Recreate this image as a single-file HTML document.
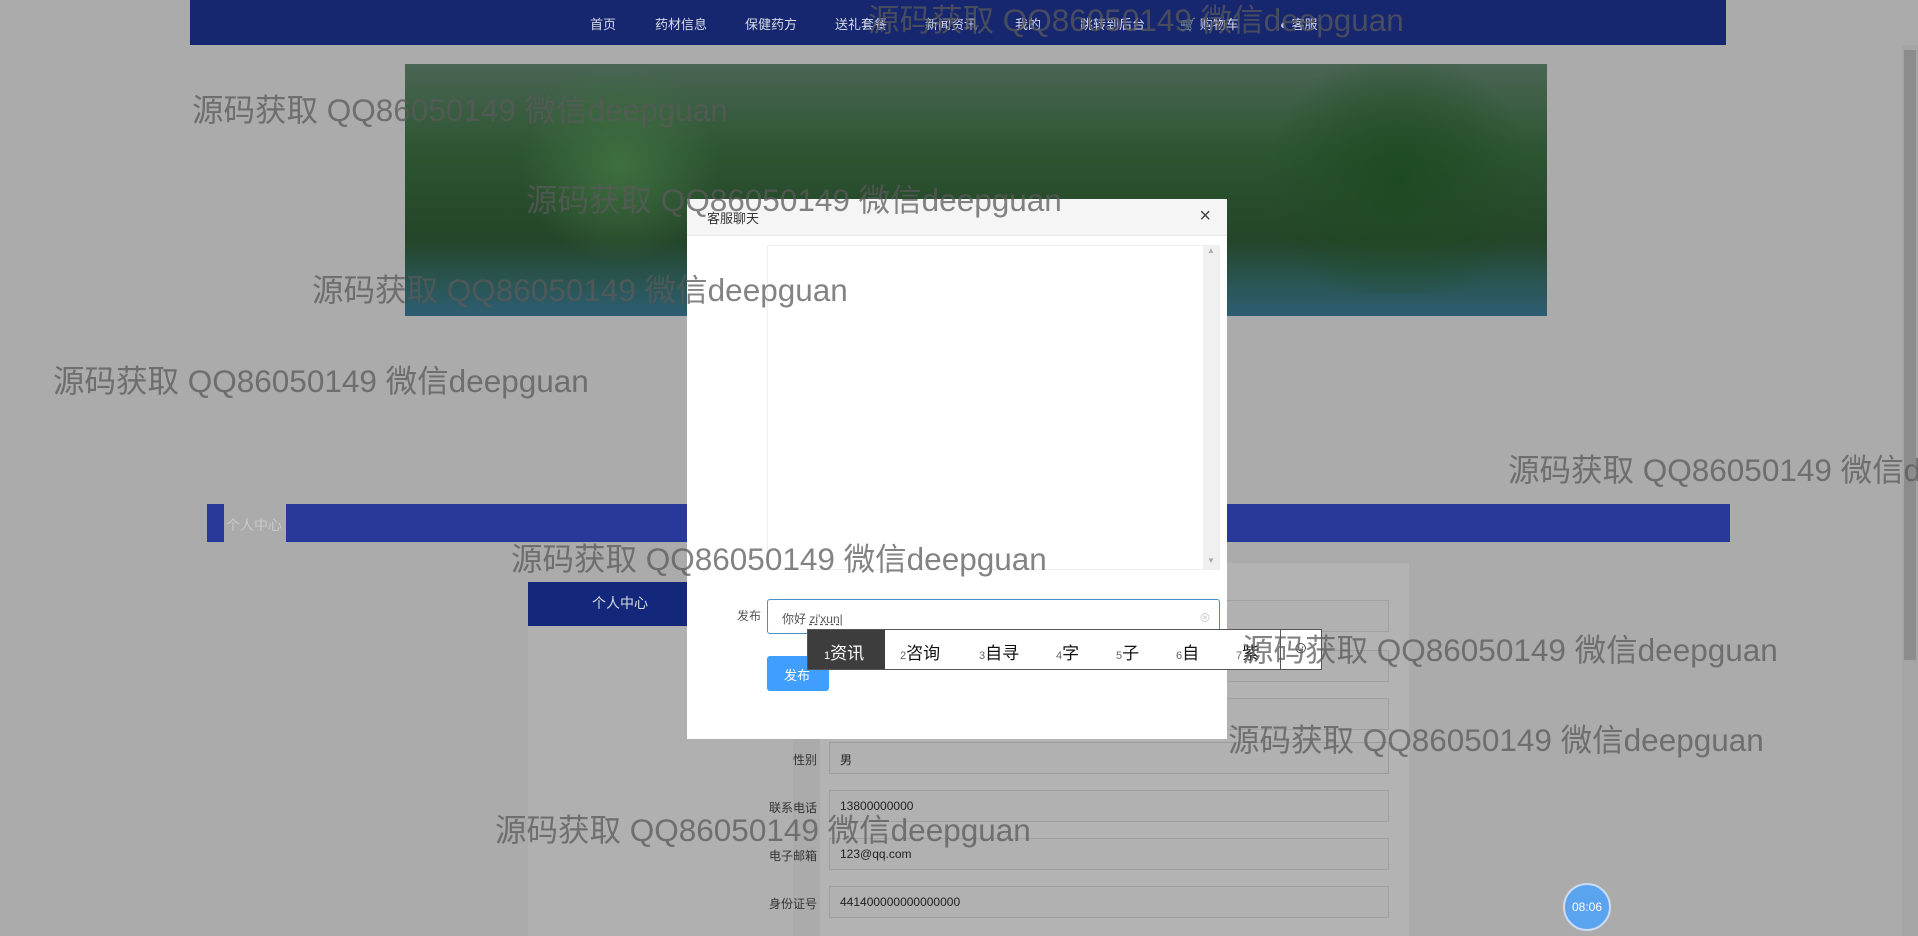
<!DOCTYPE html>
<html><head><meta charset="utf-8"><style>
*{margin:0;padding:0;box-sizing:border-box}
body{width:1918px;height:936px;overflow:hidden;background:#ababab;font-family:"Liberation Sans","Noto Sans CJK SC",sans-serif;position:relative}
.a{position:absolute}
.nav{left:190px;top:0;width:1536px;height:45px;background:#16266f}
.nav span{position:absolute;top:14px;font-size:13px;color:#d8dbe8}
.wm{position:absolute;font-size:31.5px;color:rgba(90,90,90,.75);white-space:nowrap;font-family:"Liberation Sans","Noto Sans CJK SC",sans-serif;z-index:20;line-height:1}
.lbl{position:absolute;font-size:12px;color:#333;text-align:right;width:60px}
.inp{position:absolute;left:829px;width:560px;height:32px;border:1px solid #a0a0a0;background:#b1b1b1;font-size:12px;color:#222;padding:8px 10px}
</style></head><body>
<div class="a nav">
<span style="left:400px">首页</span><span style="left:465px">药材信息</span><span style="left:555px">保健药方</span><span style="left:645px">送礼套餐</span><span style="left:735px">新闻资讯</span><span style="left:825px">我的</span><span style="left:890px">跳转到后台</span><span style="left:990px">🛒 购物车</span><span style="left:1090px">◐ 客服</span>
</div>
<div class="a" style="left:405px;top:64px;width:1142px;height:252px;background:linear-gradient(180deg,#4a6654 0%,#2c5531 35%,#244529 70%,#2a5656 88%,#2d5d72 100%)"></div>
<div class="a" style="left:520px;top:64px;width:200px;height:200px;background:radial-gradient(circle,#3f6f40,transparent 70%)"></div>
<div class="a" style="left:1250px;top:64px;width:297px;height:230px;background:radial-gradient(circle,#1e4a22,transparent 70%)"></div>
<div class="a" style="left:207px;top:504px;width:1523px;height:38px;background:#28399a"></div>
<div class="a" style="left:224px;top:504px;width:62px;height:38px;background:#ababab;font-size:14px;color:#c9c9c9;padding:11px 2px">个人中心</div>
<div class="a" style="left:528px;top:626px;width:265px;height:310px;background:#b0b0b0"></div>
<div class="a" style="left:528px;top:582px;width:265px;height:44px;background:#13287a;color:#d8dbe8;font-size:14px;padding:11px 0 0 64px">个人中心</div>
<div class="a" style="left:820px;top:563px;width:589px;height:373px;background:#b3b3b3"></div>
<div class="inp" style="top:600px"></div><div class="inp" style="top:650px"></div><div class="inp" style="top:698px"></div>
<div class="lbl" style="left:757px;top:751px">性别</div><div class="inp" style="top:742px;border-color:#9c9c9c">男</div>
<div class="lbl" style="left:757px;top:799px">联系电话</div><div class="inp" style="top:790px">13800000000</div>
<div class="lbl" style="left:757px;top:847px">电子邮箱</div><div class="inp" style="top:838px">123@qq.com</div>
<div class="lbl" style="left:757px;top:895px">身份证号</div><div class="inp" style="top:886px">441400000000000000</div>
<div class="a" style="left:1902px;top:45px;width:16px;height:891px;background:#a5a5a5"></div>
<div class="a" style="left:1904px;top:50px;width:12px;height:610px;background:#8c8c8c"></div>
<div class="a" style="left:1563px;top:883px;width:48px;height:48px;border-radius:50%;background:#5aa3ee;border:2px solid #c9dcf3;color:#fff;font-size:12px;text-align:center;line-height:44px">08:06</div>
<div class="a" style="left:687px;top:199px;width:540px;height:540px;background:#fff;z-index:5">
<div style="height:37px;background:#f5f5f5;border-bottom:1px solid #e8e8e8;position:relative"><span style="position:absolute;left:20px;top:9px;font-size:13px;color:#333">客服聊天</span><span style="position:absolute;right:16px;top:6px;font-size:20px;color:#444">×</span></div>
<div style="position:absolute;left:80px;top:46px;width:453px;height:325px;border:1px solid #eee"></div>
<div style="position:absolute;left:516px;top:47px;width:16px;height:323px;background:#f0f0f0;font-size:8px;color:#aaa;text-align:center">▲<div style="position:absolute;bottom:4px;width:16px">▼</div></div>
<div style="position:absolute;left:50px;top:408px;font-size:12px;color:#555">发布</div>
<div style="position:absolute;left:80px;top:400px;width:453px;height:35px;border:1px solid #4a90c8;border-radius:3px;font-size:12px;color:#555;padding:10px 14px">你好 <u style="text-decoration-style:dashed">zi'xun</u>|<span style="position:absolute;right:8px;top:9px;color:#ccc">⊗</span></div>
<div style="position:absolute;left:80px;top:457px;width:62px;height:35px;background:#409eff;border-radius:3px;color:#fff;font-size:13px;padding:9px 17px">发布</div>
</div>
<div class="a" style="left:807px;top:629px;width:515px;height:41px;background:#fff;border:1px solid #555;z-index:6;font-size:17px;color:#111;white-space:nowrap">
<span style="display:inline-block;width:77px;height:39px;background:#3d3d3d;color:#fff;padding:9px 0 0 16px"><small style="font-size:11px">1</small>资讯</span><span style="position:absolute;left:92px;top:9px"><small style="font-size:11px;color:#666">2</small>咨询</span><span style="position:absolute;left:171px;top:9px"><small style="font-size:11px;color:#666">3</small>自寻</span><span style="position:absolute;left:248px;top:9px"><small style="font-size:11px;color:#666">4</small>字</span><span style="position:absolute;left:308px;top:9px"><small style="font-size:11px;color:#666">5</small>子</span><span style="position:absolute;left:368px;top:9px"><small style="font-size:11px;color:#666">6</small>自</span><span style="position:absolute;left:428px;top:9px"><small style="font-size:11px;color:#666">7</small>紫</span><span style="position:absolute;left:472px;top:0;width:1px;height:39px;background:#555"></span><span style="position:absolute;left:484px;top:8px">☺</span></div>
<div class="wm" style="left:868px;top:5px">源码获取 QQ86050149 微信deepguan</div>
<div class="wm" style="left:192px;top:95px">源码获取 QQ86050149 微信deepguan</div>
<div class="wm" style="left:526px;top:185px">源码获取 QQ86050149 微信deepguan</div>
<div class="wm" style="left:312px;top:275px">源码获取 QQ86050149 微信deepguan</div>
<div class="wm" style="left:53px;top:366px">源码获取 QQ86050149 微信deepguan</div>
<div class="wm" style="left:1508px;top:455px">源码获取 QQ86050149 微信deepguan</div>
<div class="wm" style="left:511px;top:544px">源码获取 QQ86050149 微信deepguan</div>
<div class="wm" style="left:1242px;top:635px">源码获取 QQ86050149 微信deepguan</div>
<div class="wm" style="left:1228px;top:725px">源码获取 QQ86050149 微信deepguan</div>
<div class="wm" style="left:495px;top:815px">源码获取 QQ86050149 微信deepguan</div>
</body></html>
